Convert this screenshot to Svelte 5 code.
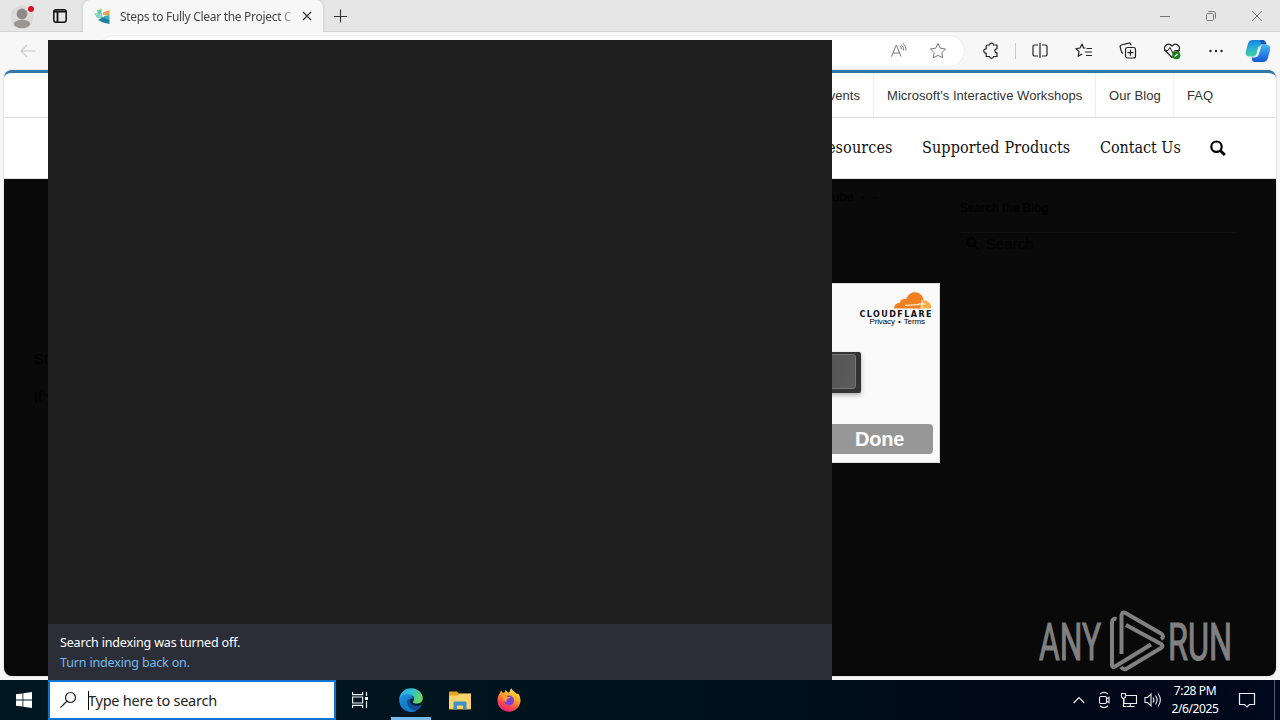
<script>
  const links = [
    { text: "Microsoft's Interactive Workshops", cls: 'workshops' },
    { text: 'Our Blog', cls: 'blog' },
    { text: 'FAQ', cls: 'faq' }
  ];
</script>

<div class="desktop">
  <div class="browser">
    <header class="tabs">
      <div class="profile">
        <svg width="28" height="30" viewBox="0 0 28 30"><circle cx="14" cy="16" r="11.5" fill="#dcdad8"/><circle cx="14" cy="13" r="5.4" fill="#8e8a87"/><ellipse cx="14" cy="23" rx="8.2" ry="4.2" fill="#9a9693"/><circle cx="23" cy="8" r="3" fill="#d9121f"/></svg>
      </div>
      <svg class="workspace" width="16" height="16" viewBox="0 0 16 16"><rect x="1.8" y="1.8" width="12.4" height="12.4" rx="2.2" fill="none" stroke="#111" stroke-width="1.5"/><path d="M2 3.6h12M5.5 4v10" stroke="#111" stroke-width="1.8"/></svg>
      <div class="tab">
        <svg width="18" height="18" viewBox="0 0 18 18"><path d="M3 3 7 2.500 8 7 4 7Z" fill="#65c6a2"/><path d="M9 5.500 15.500 3V8L9 8Z" fill="#f5a04b"/><path d="M0 6 8 7 9 11 3 11Z" fill="#8bd3bd"/><path d="M10 9 15.500 8V14L10 11Z" fill="#3aa9c4"/><path d="M4 13 9 10 15.500 13.500V17L9 15.500Z" fill="#1f7f9f"/><path d="M6 1 8 2 8 7Z" fill="#e6d56b"/></svg>
        <span class="title">Steps to Fully Clear the Project C</span>
        <svg class="close" width="10" height="10" viewBox="0 0 10 10"><path d="m1 1 8 8M9 1 1 9" stroke="#333" stroke-width="1.2"/></svg>
      </div>
      <svg class="plus" width="14" height="14" viewBox="0 0 14 14"><path d="M6.500 .5v13M0 7.500h13" stroke="#333" stroke-width="1.1"/></svg>
      <div class="controls">
        <svg width="12" height="12" viewBox="0 0 12 12"><path d="M1 6.5h10" stroke="#777"/></svg>
        <svg width="12" height="12" viewBox="0 0 12 12"><rect x="1.5" y="3.5" width="7" height="7" rx="1.2" fill="none" stroke="#777"/><path d="M3.5 1.5h5a2 2 0 0 1 2 2v5" fill="none" stroke="#777"/></svg>
        <svg width="12" height="12" viewBox="0 0 12 12"><path d="m1 1 10 10M11 1 1 11" stroke="#777"/></svg>
      </div>
    </header>

    <div class="toolbar">
      <svg class="back" width="16" height="14" viewBox="0 0 16 14"><path d="M15.500 7H1M7 1 1 7l6 6" fill="none" stroke="#c9c9c9" stroke-width="1.1"/></svg>
      <div class="address">
        <svg width="18" height="18" viewBox="0 0 18 18" fill="none" stroke="#777"><path d="m1.500 14.500 4.500-11h.5l4.500 11M3 11h7M10 4q1.500 1.300 1.300 3.500M11.300 2.700q2.700 2 2.200 5.600M12.600 1.200q3.900 2.500 3.200 7.500"/></svg>
        <svg width="18" height="18" viewBox="0 0 18 18" fill="none" stroke="#777" stroke-linejoin="round"><path d="m9 1.500 2.300 4.700 5.200.8-3.700 3.600.8 5.200L9 13.400l-4.600 2.400.8-5.200L1.500 7l5.200-.8Z"/></svg>
      </div>
      <svg class="ext" width="18" height="18" viewBox="0 0 18 18" fill="none" stroke="#222" stroke-width="1.200" stroke-linejoin="round"><path d="M5.500 3h2.100c.1-2.400 3.800-2.400 3.900 0H15v3.800c-2.900-.3-2.900 4.200 0 4v3.700h-3.500c-.2 2.400-3.800 2.400-3.900 0H4.200v-3.300c-3.200.1-3.200-4.500 0-4.300V4.300C4.200 3.400 4.600 3 5.500 3Z"/></svg>
      <i class="divider"></i>
      <div class="tools">
        <svg width="18" height="18" viewBox="0 0 18 18" fill="none" stroke="#222" stroke-width="1.200"><path d="M7 3H3.500A1.500 1.500 0 0 0 2 4.500v8A1.500 1.500 0 0 0 3.500 14H7M11 3h3.500A1.500 1.500 0 0 1 16 4.500v8a1.500 1.500 0 0 1-1.500 1.500H11M9 1v15"/></svg>
        <svg width="18" height="18" viewBox="0 0 18 18" fill="none" stroke="#222" stroke-width="1.200" stroke-linejoin="round"><path d="m10.200 6.200-1.600-.3L7 2 5.100 6 1 6.600l3 3-.8 4.700L7.200 12M11.500 6.500H17M10 10h7M11 13.500h6"/></svg>
        <svg width="18" height="18" viewBox="0 0 18 18" fill="none" stroke="#222" stroke-width="1.200"><path d="M4 11.500c-1-.5-1.200-1-1.600-2L1.200 5.200c-.3-1 .2-1.900 1.200-2.200l7.200-1.900c1-.3 1.900.2 2.200 1.200L12 3.500"/><rect x="6.500" y="5.500" width="10" height="10.500" rx="2"/><path d="M11.500 7.700v6M8.500 10.700h6"/></svg>
        <svg width="18" height="18" viewBox="0 0 18 18"><path d="M9 15.500 2.700 9C-.8 4.500 5-.2 9 4c4-4.200 9.800.5 6.300 5Z" fill="none" stroke="#222" stroke-width="1.200"/><path d="M1 8.500h4L7 5.500l3 6 1.700-3H17" fill="none" stroke="#222"/><circle cx="13.300" cy="13.300" r="4" fill="#168016"/><path d="m11.500 14.500 3.500-2.500" stroke="#fff" stroke-width="1.100"/></svg>
        <svg width="18" height="18" viewBox="0 0 18 18" fill="#222"><circle cx="3.500" cy="9" r="1.200"/><circle cx="9" cy="9" r="1.200"/><circle cx="14.500" cy="9" r="1.200"/></svg>
      </div>
      <svg class="copilot" width="26" height="24" viewBox="0 0 26 24">
        <defs><linearGradient id="cpa" x2=".2" y2="1"><stop stop-color="#1b78d8"/><stop offset=".45" stop-color="#20a9dc"/><stop offset="1" stop-color="#45d0a0"/></linearGradient><linearGradient id="cpb" x2="0" y2="1"><stop stop-color="#3fb8ee"/><stop offset="1" stop-color="#1557d8"/></linearGradient></defs>
        <path d="M7.500 1h10c1.500 0 2.200 1.500 2.500 3-3 0-4.200 1.500-5 4L12.300 14.500c-.7 2-1.800 3-3.800 3H4.500C1.200 17.500 0 15 1 12l2-7.500C4 2 5.500 1 7.500 1Z" fill="url(#cpa)"/>
        <path d="M18.500 23h-9c-1.700 0-2.500-2-3-4.500h2.500c2.500 0 3.500-1.200 4.200-3.500L15.500 8.500c.7-2 1.800-2.700 3.500-2.700h2.500c3.500 0 4.200 3 3.400 5.700l-2 7.500C22 21.700 20.500 23 18.500 23Z" fill="url(#cpb)"/>
        <path d="M15 1h3c2.200 0 3 2.300 3.600 4.500H16Z" fill="#1558bc"/><path d="M13.500 7.500h2.600L13 17.500h-3.500q1.500-.5 2-2.500Z" fill="#eef8ff"/>
      </svg>
    </div>

    <main class="page">
      <nav class="topnav">
        <span class="events">Events</span>
        {#each links as link}<span class={link.cls}>{link.text}</span>{/each}
      </nav>
      <nav class="mainnav">
        <span class="resources">Resources</span><span class="products">Supported Products</span><span class="contact">Contact Us</span>
        <svg width="16" height="16" viewBox="0 0 16 16" fill="none" stroke="#000"><circle cx="6.500" cy="6.700" r="5.200" stroke-width="2.200"/><path d="m10.300 10.500 4.500 4.500" stroke-width="2.800"/></svg>
      </nav>
      <div class="shade">
        <div class="left"><p>Steps</p><p>If you</p></div>
        <div class="crumb">ube  -  -</div>
        <aside>
          <h4>Search the Blog</h4>
          <div class="find"><svg width="13" height="13" viewBox="0 0 16 16" fill="none" stroke="#000"><circle cx="6.500" cy="6.500" r="5" stroke-width="2.500"/><path d="m10 10 5 5" stroke-width="3"/></svg>Search</div>
        </aside>
      </div>
    </main>
  </div>

  <section class="captcha">
    <div class="brand">
      <svg width="38" height="17" viewBox="0 0 38 17"><path d="M0 16.500C0 13 2.500 11 6 11c0-3.500 3.500-4.800 6-3.500C14 2 18 .2 21 .2c5 .3 8 3.500 8.500 7.800L27 16.500Z" fill="#f38020"/><path d="M25 16.500c2-2 1-3.500 4-8.300 5-.5 8.500 3.300 8.300 8.300Z" fill="#faae40"/><path d="M11 13.300 25 12.700M28 8v8M24 12h7" stroke="#fff" stroke-width="1"/></svg>
      <b>CLOUDFLARE</b>
      <small>Privacy &bull; Terms</small>
    </div>
    <div class="key"><i></i></div>
    <button>Done</button>
  </section>

  <svg class="watermark" width="200" height="66" viewBox="0 0 200 66">
    <g fill="#808080" stroke="#808080" stroke-width="1.200" font-family="Roboto, sans-serif" font-size="51">
      <text x="1" y="51.500" textLength="62" lengthAdjust="spacingAndGlyphs">ANY</text>
      <text x="130" y="51.500" textLength="64" lengthAdjust="spacingAndGlyphs">RUN</text>
    </g>
    <g fill="none" stroke="#808080" stroke-width="4" stroke-linejoin="round">
      <path d="M78.500 11q-4.500-1-4.500 4v42q0 3 3 1.500l36-22"/>
      <path d="M83.500 46V8q0-5 4-3l35.500 20.500q4 3 0 5.500"/>
      <path d="m88 17 35 19q3 2 0 4L88 61q-3 1-5-2"/>
    </g>
  </svg>

  <section class="panel">
    <footer><p>Search indexing was turned off.</p><a href="#indexing">Turn indexing back on.</a></footer>
  </section>

  <div class="taskbar">
    <div class="start"><svg width="16" height="16" viewBox="0 0 16 16" fill="#fff"><path d="M0 2.300 6.500 1.400v6.200H0ZM7.300 1.300 16 0v7.600H7.300ZM0 8.400h6.500v6.200L0 13.700ZM7.300 8.400H16V16l-8.700-1.300Z"/></svg></div>
    <div class="search">
      <svg width="18" height="18" viewBox="0 0 18 18" fill="none" stroke="#222" stroke-width="1.200"><circle cx="10.500" cy="6.500" r="5"/><path d="M6.900 10.200.5 16.500"/></svg>
      <i></i><span>Type here to search</span>
    </div>
    <div class="app view"><svg width="18" height="18" viewBox="0 0 18 18" fill="none" stroke="#e8eef0" stroke-width="1.200"><path d="M1.600 1v2.700h10V1M1.600 17v-2.700h10V17M1.600 6h10v6h-10ZM15.500 1v4M15.500 10v7"/><path d="M14 6h3v3h-3Z" fill="#fff" stroke="none"/></svg></div>
    <div class="app edge"><svg width="24" height="24" viewBox="0 0 24 24">
      <defs><linearGradient id="ea" x2="1" y2=".3"><stop stop-color="#26a8e7"/><stop offset=".6" stop-color="#35c1c9"/><stop offset="1" stop-color="#66d860"/></linearGradient><linearGradient id="eb" y2="1"><stop stop-color="#2199e5"/><stop offset="1" stop-color="#0b59ac"/></linearGradient></defs>
      <path d="M.2 12C.2 4 8 1 12 5l3 8c1 4 5 5 7.500 4C20 21.500 16 24 12 24 5 24 .2 18.500.2 12Z" fill="url(#eb)"/>
      <path d="M8.500 11.500C6.500 17 11 23.500 17 22.700c-5 2.800-12-.7-12-6.200 0-2.500 1.500-4.300 3.500-5Z" fill="#1480cf"/>
      <path d="M.5 10C2 3 7-.1 12.500.2 19 .5 24 5 23.800 10.500c-.2 3.500-3 5.300-6.200 5.300-3 0-4-1-3.800-2 .1-.8 1.200-1.200 1.200-3C15 8 12 6.300 9 6.300 5 6.300 2 8 .5 10Z" fill="url(#ea)"/>
      <path d="M8.500 12C7 17.500 12 23.500 18 22c2-1 3.800-2.800 4.700-4.700.2-.5-.2-.7-.7-.5-4 1.700-9.500.2-9.300-4.300-1-2-3.300-2-4.200-.5Z" fill="#104f95"/>
      <path d="M12.500 10.500c1.500-.2 2.500.5 2.300 1.500-.2.800-1 1.200-1 2 .2 1.500 3 2.200 6 1.500 1.500-.3 2.500-1 3.200-1.800.2 1.500-.5 3-1.500 3.500-4 1.500-10.500 0-10.300-4.500 0-1 .5-1.800 1.300-2.200Z" fill="#04202f"/>
    </svg></div>
    <div class="app"><svg width="22" height="19" viewBox="0 0 22 19"><path d="M0 1.500Q0 .5 1 .5h7l2 2h12v16H0Z" fill="#e5a524"/><path d="M0 4.500h8.500l2-1.700H22v15H0Z" fill="#f8d36b"/><path d="M4.500 18.500V12q0-1.500 1.500-1.500h10q1.500 0 1.500 1.500v6.500H14v-4H8v4Z" fill="#3b91c8"/></svg></div>
    <div class="app"><svg width="24" height="24" viewBox="0 0 24 24">
      <defs><linearGradient id="fa" x1=".8" x2=".3" y2="1"><stop stop-color="#fff04c"/><stop offset=".4" stop-color="#ffa328"/><stop offset=".75" stop-color="#ff4550"/><stop offset="1" stop-color="#e51d78"/></linearGradient></defs>
      <path d="M3 5l1-2.500L6 5l2-1 .5-2L11 4.500h1c1-.5 1-3 2.500-4.200C15 3 19 4.500 20 6l1-.5C23 8 23.500 10 23.500 13 23 19 18 23.700 12 23.700S.7 19 .5 13C.4 10 1.200 7 3 5Z" fill="url(#fa)"/><circle cx="12" cy="12.500" r="5" fill="#7942d3"/><path d="M5 7.500c2.500-1 4-.5 5.500 1.500h3c-.5 1.500-3 1.300-3.500 2.300-1 .7-.7 1.700 0 2.200-1 .5-2 .3-3-.5Z" fill="#ff9a2b"/>
    </svg></div>
    <div class="tray">
      <svg width="12" height="8" viewBox="0 0 12 8" fill="none" stroke="#eee" stroke-width="1.200"><path d="m.7 7 5.300-5.300L11.300 7"/></svg>
      <svg width="14" height="18" viewBox="0 0 14 18" fill="none" stroke="#eee" stroke-width="1.100"><rect x="2.500" y="5.500" width="7" height="7" rx="1.200"/><path d="m9.500 8 2.500-1.800v5.600L9.500 10M3 3c2.500-2 5.500-2 8 0M3 15c2.500 2 5.500 2 8 0"/></svg>
      <svg width="18" height="16" viewBox="0 0 18 16" fill="none" stroke="#eee" stroke-width="1.100"><path d="M6 3.500h10.500v8H4V7M10.300 11.500V14M6.500 14.500h8M1.500 1.500h4V5l-2 2-2-2ZM3.500 7v7.500H6"/></svg>
      <svg width="18" height="16" viewBox="0 0 18 16" fill="none" stroke="#eee" stroke-width="1.100"><path d="M1 5.500h2.500L7 2v12l-3.500-3.500H1ZM9 5.500q1.800 2.500 0 5M11.500 3.500q3.200 4.500 0 9M14 1.500q4.700 6.500 0 13"/></svg>
    </div>
    <div class="clock"><span>7:28 PM</span><span>2/6/2025</span></div>
    <svg class="notice" width="18" height="18" viewBox="0 0 18 18" fill="none" stroke="#eee" stroke-width="1.200"><path d="M1.500 2.500h15v11h-5L9 16l-2.500-2.500h-5Z"/></svg>
    <i class="peek"></i>
  </div>
</div>

<style>
  :global(body) { margin: 0; overflow: hidden; }
  * { box-sizing: border-box; }
  svg { display: block; flex: none; overflow: visible; }
  p, h4 { margin: 0; }
  span { white-space: nowrap; }
  .desktop { position: relative; width: 1280px; height: 720px; overflow: hidden; font-family: "Noto Sans", "Open Sans", sans-serif; }
  .browser { height: 680px; background: #f7f7f7; display: flex; flex-direction: column; }
  .tabs { height: 32px; flex: none; background: #e6e6e6; border-bottom: 1px solid #d5d5d5; display: flex; align-items: center; padding-left: 8px; }
  .profile { width: 44px; }
  .workspace { margin-right: 15px; }
  .tab { width: 240px; height: 32px; margin-bottom: -1px; background: #f7f7f7; border-radius: 7px 7px 0 0; box-shadow: 0 0 3px #bbb; clip-path: inset(0 -4px); display: flex; align-items: center; padding-left: 11px; }
  .title { width: 175px; margin-left: 8px; overflow: hidden; font: 12px "Noto Sans", sans-serif; letter-spacing: -.3px; color: #444; mask-image: linear-gradient(90deg, #000 158px, transparent 177px); }
  .close { margin-left: 7px; }
  .plus { margin-left: 11px; }
  .controls { margin-left: auto; margin-right: 17px; display: flex; gap: 34px; }
  .toolbar { height: 38px; flex: none; display: flex; align-items: center; padding-left: 20px; }
  .address { margin-left: 63px; width: 865px; height: 30px; background: #fff; border-radius: 15px; box-shadow: 0 0 2px #ddd; display: flex; justify-content: flex-end; align-items: center; gap: 21px; padding-right: 17px; }
  .ext { margin-left: 18px; }
  .divider { width: 1px; height: 16px; background: #ccc; margin: 0 15px; }
  .tools { display: flex; gap: 26px; }
  .copilot { margin-left: 20px; }
  .page { margin: 0 4px 4px; height: 606px; border-radius: 8px; overflow: hidden; border-top: 3px solid #3278a8; background: #fff; box-shadow: 0 0 2px #bbb; }
  .topnav { height: 45px; border-bottom: 1px solid #ddd; display: flex; justify-content: flex-end; padding-right: 50px; font: 13px/45px "Liberation Sans", Arial, sans-serif; color: #333; letter-spacing: .05px; }
  .topnav span { padding-left: 13px; border-right: 1px solid #eee; }
  .topnav .events { width: 70px; padding-left: 16px; }
  .topnav .workshops { width: 222px; }
  .topnav .blog { width: 78px; }
  .topnav .faq { width: 52px; border: 0; }
  .mainnav { height: 61px; border-bottom: 1px solid #ddd; display: flex; align-items: center; justify-content: flex-end; padding-right: 50px; font: 16px "DejaVu Serif Condensed", "DejaVu Serif", serif; font-stretch: condensed; color: #111; letter-spacing: .12px; }
  .mainnav span { padding-bottom: 2px; }
  .resources { width: 106px; }
  .products { width: 178px; }
  .contact { width: 110px; letter-spacing: -.05px; }
  .shade { height: 497px; background: #090909; display: flex; color: #020202; }
  .left { width: 820px; padding: 170px 0 0 30px; font: 15px/20px "Liberation Sans", sans-serif; }
  .left p + p { margin-top: 18px; }
  .crumb { width: 136px; padding: 10px 0 0 8px; font: 13px "Liberation Sans", sans-serif; white-space: pre; }
  aside { width: 276px; padding-top: 20px; font: 15px "Liberation Sans", sans-serif; }
  aside h4 { font: bold 12px/18px "Liberation Sans", sans-serif; letter-spacing: -.2px; }
  .find { display: flex; align-items: center; gap: 7px; margin-top: 15px; padding: 2px 6px; border-top: 1px solid #101010; }
  .captcha { position: absolute; left: 640px; top: 283px; width: 300px; height: 180px; background: #fafafa; border: 1px solid #ddd; display: flex; flex-direction: column; padding: 8px 6px; }
  .brand { align-self: flex-end; width: 78px; display: flex; flex-direction: column; align-items: flex-end; padding-right: 1px; color: #111; }
  .brand b { font: bold 8px/9px "DejaVu Sans", sans-serif; letter-spacing: 1.450px; margin-right: -1px; margin-top: 1px; }
  .brand small { font: 8px/9px "Liberation Sans", sans-serif; margin: -2px 7px 0 0; letter-spacing: -.1px; word-spacing: 1px; color: #000; white-space: nowrap; }
  .key { width: 150px; height: 41px; margin-left: 64px; margin-top: 26px; background: #333; border-radius: 2px; padding: 2px 5px 4px; box-shadow: 0 2px 4px #aaa; }
  .key i { display: block; height: 35px; background: linear-gradient(100deg, #444, #5b5b5b); border: 1px solid #777; border-radius: 3px; }
  button { margin-top: auto; height: 30px; border: 0; border-radius: 4px; background: #979797; color: #fff; font: bold 20px "Liberation Sans", sans-serif; padding: 0 11px 0 190px; width: 286px; text-align: center; letter-spacing: -.2px; }
  .watermark { position: absolute; left: 1038px; top: 608px; }
  .panel { position: absolute; left: 48px; top: 40px; width: 784px; height: 640px; background: #1f1f1f; display: flex; align-items: flex-end; }
  .panel footer { width: 100%; height: 56px; background: #2b2e36; padding: 9px 12px; font-size: 12.500px; line-height: 20px; color: #fff; letter-spacing: -.16px; }
  .panel a { display: block; color: #76b9ed; text-decoration: none; }
  .taskbar { height: 40px; background: linear-gradient(90deg, #001820, #00131d 50%, #000717 85%, #00091d); display: flex; align-items: center; color: #fff; }
  .start { width: 48px; display: grid; place-items: center; }
  .search { width: 288px; height: 40px; background: #fff; border: 2px solid #0873d0; display: flex; align-items: center; padding-left: 10px; color: #222; font-size: 14.500px; letter-spacing: -.24px; }
  .search i { width: 1px; height: 19px; background: #000; margin: 0 -1px 0 10px; }
  .app { width: 49px; height: 40px; display: grid; place-items: center; }
  .view { padding-right: 1px; }
  .edge { width: 40px; margin: 0 4px 0 6px; box-shadow: inset 0 -3px #76b9ed; }
  .tray { margin-left: auto; display: flex; align-items: center; width: 88px; margin-right: 4px; }
  .tray svg:nth-child(2) { margin-left: 12px; }
  .tray svg:nth-child(3) { margin-left: 9px; }
  .tray svg:nth-child(4) { margin-left: 6px; }
  .clock { width: 60px; display: flex; flex-direction: column; align-items: center; font-size: 12px; line-height: 18px; letter-spacing: -.4px; }
  .notice { margin-left: 13px; margin-right: 18px; }
  .peek { width: 6px; height: 40px; border-left: 1px solid #555b65; }
</style>
